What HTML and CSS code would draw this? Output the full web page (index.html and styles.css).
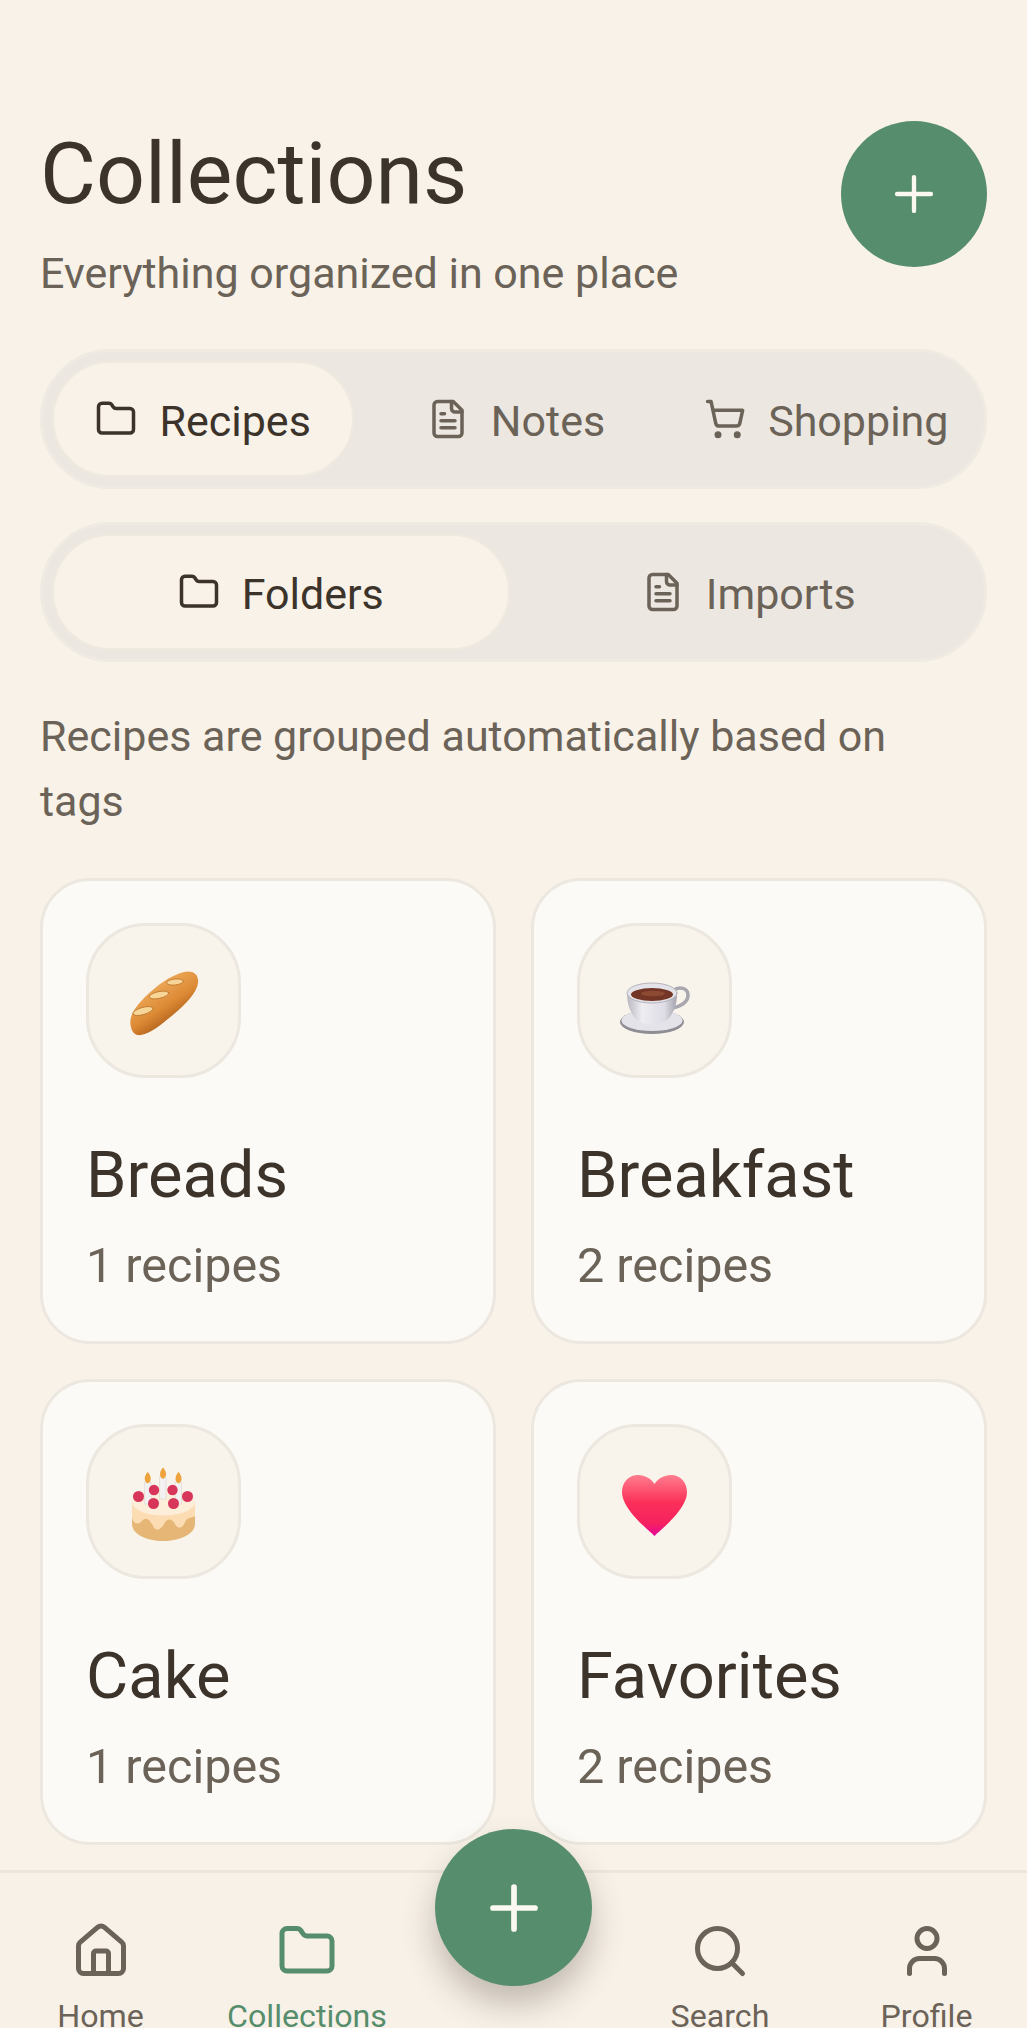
FILE: index.html
```html
<!DOCTYPE html>
<html lang="en">
<head>
    <meta charset="UTF-8">
    <meta name="viewport" content="width=device-width, initial-scale=1.0">
    <title>Collections</title>
    <link rel="stylesheet" href="styles.css">
</head>
<body>
    <main class="page">
        <header class="page-header">
            <div class="page-heading">
                <h1>Collections</h1>
                <p>Everything organized in one place</p>
            </div>
            <button class="add-button" aria-label="Add">
                <svg class="add-icon" viewBox="0 0 24 24"><path d="M5 12h14M12 5v14"/></svg>
            </button>
        </header>

        <div class="segments segments-three">
            <div class="segment active">
                <svg class="icon" viewBox="0 0 24 24"><path d="M20 20a2 2 0 0 0 2-2V8a2 2 0 0 0-2-2h-7.900a2 2 0 0 1-1.690-.9L9.600 3.900A2 2 0 0 0 7.930 3H4a2 2 0 0 0-2 2v13a2 2 0 0 0 2 2Z"/></svg>
                <span>Recipes</span>
            </div>
            <div class="segment">
                <svg class="icon" viewBox="0 0 24 24"><path d="M15 2H6a2 2 0 0 0-2 2v16a2 2 0 0 0 2 2h12a2 2 0 0 0 2-2V7Z"/><path d="M14 2v4a2 2 0 0 0 2 2h4"/><path d="M10 9H8M16 13H8M16 17H8"/></svg>
                <span>Notes</span>
            </div>
            <div class="segment">
                <svg class="icon" viewBox="0 0 24 24"><circle cx="8" cy="21" r="1"/><circle cx="19" cy="21" r="1"/><path d="M2.050 2.050h2l2.660 12.420a2 2 0 0 0 2 1.580h9.780a2 2 0 0 0 1.950-1.570l1.650-7.430H5.120"/></svg>
                <span>Shopping</span>
            </div>
        </div>

        <div class="segments segments-two">
            <div class="segment active">
                <svg class="icon" viewBox="0 0 24 24"><path d="M20 20a2 2 0 0 0 2-2V8a2 2 0 0 0-2-2h-7.900a2 2 0 0 1-1.690-.9L9.600 3.900A2 2 0 0 0 7.930 3H4a2 2 0 0 0-2 2v13a2 2 0 0 0 2 2Z"/></svg>
                <span>Folders</span>
            </div>
            <div class="segment">
                <svg class="icon" viewBox="0 0 24 24"><path d="M15 2H6a2 2 0 0 0-2 2v16a2 2 0 0 0 2 2h12a2 2 0 0 0 2-2V7Z"/><path d="M14 2v4a2 2 0 0 0 2 2h4"/><path d="M10 9H8M16 13H8M16 17H8"/></svg>
                <span>Imports</span>
            </div>
        </div>

        <p class="hint">Recipes are grouped automatically based on tags</p>

        <section class="card-grid">
            <article class="card">
                <div class="emoji-box">
                    <svg class="emoji" viewBox="-4 -4 80 80">
                        <defs>
                            <linearGradient id="crust" x1="0.3" y1="0.2" x2="0.72" y2="0.8">
                                <stop offset="0" stop-color="#eeac5c"/>
                                <stop offset="0.55" stop-color="#dd8a35"/>
                                <stop offset="1" stop-color="#a85a16"/>
                            </linearGradient>
                        </defs>
                        <path d="M3 62C0 52 7 42 17 32C28 21 43 10 56 7C65 5 71 9 70 18C69 27 58 39 46 49C34 59 24 68 13 70C7 71 4 67 3 62Z" fill="url(#crust)"/>
                        <g fill="#f6d596" stroke="#b9732b" stroke-width="0.800">
                            <ellipse cx="47" cy="17" rx="8.500" ry="3" transform="rotate(-6 47 17)"/>
                            <ellipse cx="31" cy="30" rx="10" ry="3.400" transform="rotate(-12 31 30)"/>
                            <ellipse cx="15" cy="46" rx="10.500" ry="3.600" transform="rotate(-16 15 46)"/>
                        </g>
                    </svg>
                </div>
                <h2>Breads</h2>
                <p>1 recipes</p>
            </article>
            <article class="card">
                <div class="emoji-box">
                    <svg class="emoji" viewBox="-4 -4 80 80">
                        <defs>
                            <linearGradient id="cup" x1="0" y1="0" x2="1" y2="0">
                                <stop offset="0" stop-color="#b9b8c0"/>
                                <stop offset="0.3" stop-color="#eeedf1"/>
                                <stop offset="0.75" stop-color="#dedce5"/>
                                <stop offset="1" stop-color="#a3a1ac"/>
                            </linearGradient>
                        </defs>
                        <ellipse cx="33" cy="57" rx="32" ry="12" fill="#8f8d94"/>
                        <ellipse cx="33" cy="55.500" rx="30.500" ry="10.500" fill="#e4e3e9"/>
                        <path d="M55 25C60 21 69 23 69 30C69 37 62 41 54 43" fill="none" stroke="#a8a6ae" stroke-width="3.500" stroke-linecap="round"/>
                        <path d="M8 28C8 44 15 60 33 60C51 60 58 44 58 28Z" fill="url(#cup)"/>
                        <ellipse cx="33" cy="28" rx="25" ry="10" fill="#e4e3e9" stroke="#a8a6ae" stroke-width="0.800"/>
                        <ellipse cx="33" cy="29.500" rx="21" ry="6.500" fill="#733626"/>
                        <ellipse cx="34" cy="28.500" rx="12" ry="2.800" fill="#8d4a33"/>
                    </svg>
                </div>
                <h2>Breakfast</h2>
                <p>2 recipes</p>
            </article>
            <article class="card">
                <div class="emoji-box">
                    <svg class="emoji" viewBox="-4 -4 80 80">
                        <path d="M4 37V58C4 68 18 75 35 75C52 75 67 68 67 58V37Z" fill="#e6b676"/>
                        <path d="M4 37V50C4 57 10 60 14 55C18 50 22 54 25 60C28 66 33 64 36 58C39 52 44 52 47 58C50 64 55 62 57 56C59 51 64 52 67 50V37Z" fill="#fcdcb2"/>
                        <ellipse cx="35.500" cy="36" rx="31.500" ry="13.500" fill="#fdeeda"/>
                        <g fill="#f3f1f2" stroke="#d9d3d0" stroke-width="0.600">
                            <rect x="17" y="16" width="6" height="22"/>
                            <rect x="32" y="11" width="6" height="22"/>
                            <rect x="47.500" y="16" width="6" height="22"/>
                        </g>
                        <g fill="#eea23c">
                            <path d="M19.700 6C23.500 10 24 15.500 19.700 17.500C15.500 15.500 16 10 19.700 6Z"/>
                            <path d="M35 1.500C38.800 5.500 39.300 11 35 13C30.800 11 31.300 5.500 35 1.500Z"/>
                            <path d="M50.500 6C54.300 10 54.800 15.500 50.500 17.500C46.300 15.500 46.800 10 50.500 6Z"/>
                        </g>
                        <g fill="#d8355a">
                            <circle cx="10.500" cy="30.500" r="5.500"/>
                            <circle cx="26" cy="24" r="5.200"/>
                            <circle cx="44.500" cy="24" r="5.200"/>
                            <circle cx="59.500" cy="30.500" r="5.500"/>
                            <circle cx="25.500" cy="37.500" r="5.500"/>
                            <circle cx="45.500" cy="37.500" r="5.500"/>
                        </g>
                    </svg>
                </div>
                <h2>Cake</h2>
                <p>1 recipes</p>
            </article>
            <article class="card">
                <div class="emoji-box">
                    <svg class="emoji" viewBox="-4 -4 80 80">
                        <defs>
                            <linearGradient id="heart" x1="0" y1="0" x2="0" y2="1">
                                <stop offset="0" stop-color="#ff7d8e"/>
                                <stop offset="0.45" stop-color="#fb3059"/>
                                <stop offset="0.8" stop-color="#f5215f"/>
                                <stop offset="1" stop-color="#e5049a"/>
                            </linearGradient>
                        </defs>
                        <path d="M35.500 70C31 65 3 44 3 26C3 16 10 9 19 9C26 9 32 12.500 35.500 18C39 12.500 45 9 52 9C61 9 68 16 68 26C68 44 40 65 35.500 70Z" fill="url(#heart)"/>
                    </svg>
                </div>
                <h2>Favorites</h2>
                <p>2 recipes</p>
            </article>
        </section>
    </main>

    <nav class="bottom-nav">
        <div class="nav-item">
            <svg class="nav-icon" viewBox="0 0 24 24"><path d="M15 21v-8a1 1 0 0 0-1-1h-4a1 1 0 0 0-1 1v8"/><path d="M3 10a2 2 0 0 1 .709-1.528l7-5.999a2 2 0 0 1 2.582 0l7 5.999A2 2 0 0 1 21 10v9a2 2 0 0 1-2 2H5a2 2 0 0 1-2-2z"/></svg>
            <span>Home</span>
        </div>
        <div class="nav-item current">
            <svg class="nav-icon" viewBox="0 0 24 24"><path d="M20 20a2 2 0 0 0 2-2V8a2 2 0 0 0-2-2h-7.900a2 2 0 0 1-1.690-.9L9.600 3.900A2 2 0 0 0 7.930 3H4a2 2 0 0 0-2 2v13a2 2 0 0 0 2 2Z"/></svg>
            <span>Collections</span>
        </div>
        <div class="nav-spacer"></div>
        <div class="nav-item">
            <svg class="nav-icon" viewBox="0 0 24 24"><circle cx="11" cy="11" r="8"/><path d="m21 21-4.300-4.300"/></svg>
            <span>Search</span>
        </div>
        <div class="nav-item">
            <svg class="nav-icon" viewBox="0 0 24 24"><path d="M19 21v-2a4 4 0 0 0-4-4H9a4 4 0 0 0-4 4v2"/><circle cx="12" cy="7" r="4"/></svg>
            <span>Profile</span>
        </div>
        <button class="fab" aria-label="New recipe">
            <svg class="fab-icon" viewBox="0 0 24 24"><path d="M5 12h14M12 5v14"/></svg>
        </button>
    </nav>
</body>
</html>
```

FILE: styles.css
```css
* {
    box-sizing: border-box;
}
html, body {
    margin: 0;
    height: 2028px;
    overflow: hidden;
}
body {
    display: flex;
    flex-direction: column;
    background: #f8f2e8;
    color: #3c332b;
    font-family: Roboto, "Liberation Sans", sans-serif;
}
h1, h2, p {
    margin: 0;
    font-weight: 400;
}
svg {
    fill: none;
    stroke: currentColor;
    stroke-width: 2;
    stroke-linecap: round;
    stroke-linejoin: round;
    flex-shrink: 0;
}
.page {
    flex: 1;
    min-height: 0;
    overflow: hidden;
    padding: 121px 40px 0;
}
.page-header {
    display: flex;
    justify-content: space-between;
    align-items: flex-start;
    height: 228px;
}
.page-heading {
    padding-top: 8px;
}
.page-heading h1 {
    font-size: 86px;
    line-height: 90px;
}
.page-heading p {
    margin-top: 26px;
    font-size: 43px;
    line-height: 56px;
    color: #6b6258;
}
.add-button {
    width: 146px;
    height: 146px;
    padding: 0;
    border: none;
    border-radius: 50%;
    background: #568d6c;
    color: #fbf8f2;
    display: flex;
    align-items: center;
    justify-content: center;
}
.add-icon {
    width: 58px;
    height: 58px;
    stroke-width: 1.8;
}
.segments {
    display: grid;
    height: 140px;
    padding: 9px;
    border: 3px solid #efeae2;
    border-radius: 70px;
    background: #ece8e1;
    margin-bottom: 33px;
}
.segments-three {
    grid-template-columns: repeat(3, 1fr);
    gap: 8px;
}
.segments-two {
    grid-template-columns: repeat(2, 1fr);
    gap: 8px;
    margin-bottom: 42px;
}
.segment {
    display: flex;
    align-items: center;
    justify-content: center;
    gap: 22px;
    padding-left: 5px;
    border-radius: 58px;
    font-size: 43px;
    color: #6b6258;
}
.segment span {
    padding-top: 3px;
}
.segment.active {
    padding-left: 0;
    background: #f8f2e8;
    border: 2px solid #efe9df;
    color: #3c332b;
}
.icon {
    width: 42px;
    height: 42px;
}
.hint {
    max-width: 900px;
    font-size: 43px;
    line-height: 65px;
    color: #6b6258;
    margin-bottom: 44px;
}
.card-grid {
    display: grid;
    grid-template-columns: repeat(2, 1fr);
    grid-auto-rows: 466px;
    gap: 35px;
}
.card {
    padding: 42px 42px 42px 43px;
    border: 3px solid #ece7df;
    border-radius: 50px;
    background: #fcfaf6;
}
.card h2 {
    margin-top: 58px;
    font-size: 65px;
    line-height: 78px;
}
.card p {
    margin-top: 24px;
    font-size: 48.500px;
    line-height: 56px;
    color: #6b6258;
}
.emoji-box {
    display: flex;
    align-items: center;
    justify-content: center;
    width: 155px;
    height: 155px;
    border: 3px solid #ece7df;
    border-radius: 60px;
    background: #f8f3eb;
}
.emoji {
    width: 80px;
    height: 80px;
    stroke: none;
}
.bottom-nav {
    position: relative;
    display: grid;
    grid-template-columns: repeat(5, 206.500px);
    justify-content: center;
    height: 158px;
    flex-shrink: 0;
    border-top: 3px solid #ece6dc;
    background: #f8f1e8;
}
.nav-item {
    display: flex;
    flex-direction: column;
    align-items: center;
    padding-top: 48px;
    gap: 16px;
    font-size: 32.200px;
    color: #6b6258;
}
.nav-item.current {
    color: #568d6c;
}
.nav-icon {
    width: 60px;
    height: 60px;
}
.fab {
    position: absolute;
    left: 435px;
    top: -44px;
    width: 157px;
    height: 157px;
    padding: 0;
    border: none;
    border-radius: 50%;
    background: #568d6c;
    color: #fbf8f2;
    box-shadow: 0 18px 32px rgba(70, 60, 50, 0.3);
    display: flex;
    align-items: center;
    justify-content: center;
}
.fab-icon {
    width: 72px;
    height: 72px;
    stroke-width: 1.9;
}
```
